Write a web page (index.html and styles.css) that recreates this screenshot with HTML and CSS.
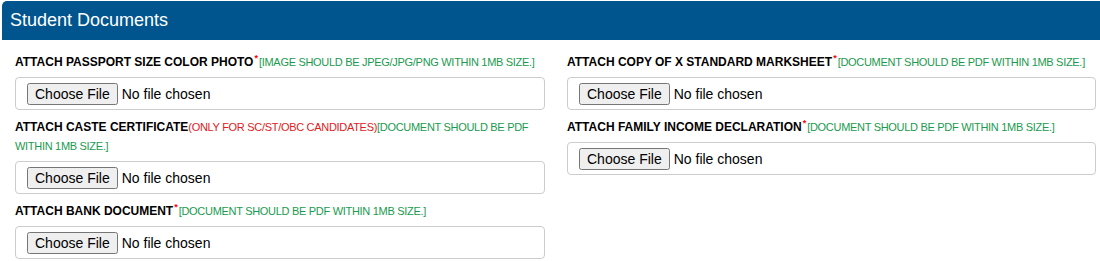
FILE: index.html
```html
<!DOCTYPE html>
<html lang="en">
<head>
    <meta charset="UTF-8">
    <meta name="viewport" content="width=device-width, initial-scale=1.0">
    <title>Student Documents</title>
    <link rel="stylesheet" href="styles.css">
</head>
<body>
    <div class="panel">
        <div class="panel-heading">Student Documents</div>
        <div class="panel-body">
            <div class="col">
                <div class="form-group">
                    <label>ATTACH PASSPORT SIZE COLOR PHOTO<sup class="req">*</sup><span class="hint">[IMAGE SHOULD BE JPEG/JPG/PNG WITHIN 1MB SIZE.]</span></label>
                    <div class="form-control"><input type="file"></div>
                </div>
                <div class="form-group">
                    <label>ATTACH CASTE CERTIFICATE<span class="note">(ONLY FOR SC/ST/OBC CANDIDATES)</span><span class="hint">[DOCUMENT SHOULD BE PDF<br>WITHIN 1MB SIZE.]</span></label>
                    <div class="form-control"><input type="file"></div>
                </div>
                <div class="form-group">
                    <label>ATTACH BANK DOCUMENT<sup class="req">*</sup><span class="hint">[DOCUMENT SHOULD BE PDF WITHIN 1MB SIZE.]</span></label>
                    <div class="form-control"><input type="file"></div>
                </div>
            </div>
            <div class="col">
                <div class="form-group">
                    <label>ATTACH COPY OF X STANDARD MARKSHEET<sup class="req">*</sup><span class="hint">[DOCUMENT SHOULD BE PDF WITHIN 1MB SIZE.]</span></label>
                    <div class="form-control"><input type="file"></div>
                </div>
                <div class="form-group">
                    <label>ATTACH FAMILY INCOME DECLARATION<sup class="req">*</sup><span class="hint">[DOCUMENT SHOULD BE PDF WITHIN 1MB SIZE.]</span></label>
                    <div class="form-control"><input type="file"></div>
                </div>
            </div>
        </div>
    </div>
</body>
</html>
```

FILE: styles.css
```css
body {
    font-family: 'Liberation Sans', Arial, sans-serif;
    background-color: #fff;
    margin: 0;
    color: #000;
}

.panel {
    padding: 1px 0 0 2px;
}

.panel-heading {
    background-color: #00558f;
    color: #fff;
    font-size: 18px;
    height: 39px;
    line-height: 39px;
    padding-left: 8px;
    border-radius: 5px 0 0 0;
}

.panel-body {
    display: grid;
    grid-template-columns: 530px 529px;
    column-gap: 22px;
    padding: 13px 0 0 13px;
}

.form-group {
    margin-bottom: 8px;
}

label {
    display: block;
    font-size: 12px;
    font-weight: bold;
    line-height: 19px;
    margin-bottom: 5px;
}

.req {
    color: #ff0000;
    font-size: 9px;
    font-weight: bold;
    vertical-align: top;
    line-height: 10px;
    margin: 0 1px;
}

.hint {
    color: #1a9a4e;
    font-size: 11px;
    font-weight: normal;
    letter-spacing: -0.3px;
}

.note {
    color: #e0201d;
    font-size: 11px;
    font-weight: normal;
    letter-spacing: -0.3px;
}

.form-control {
    border: 1px solid #ccc;
    border-radius: 4px;
    height: 33px;
    box-sizing: border-box;
    padding: 5px 11px;
}

.form-control input {
    font-family: 'Liberation Sans', Arial, sans-serif;
    font-size: 14px;
    margin: 0;
}
```
